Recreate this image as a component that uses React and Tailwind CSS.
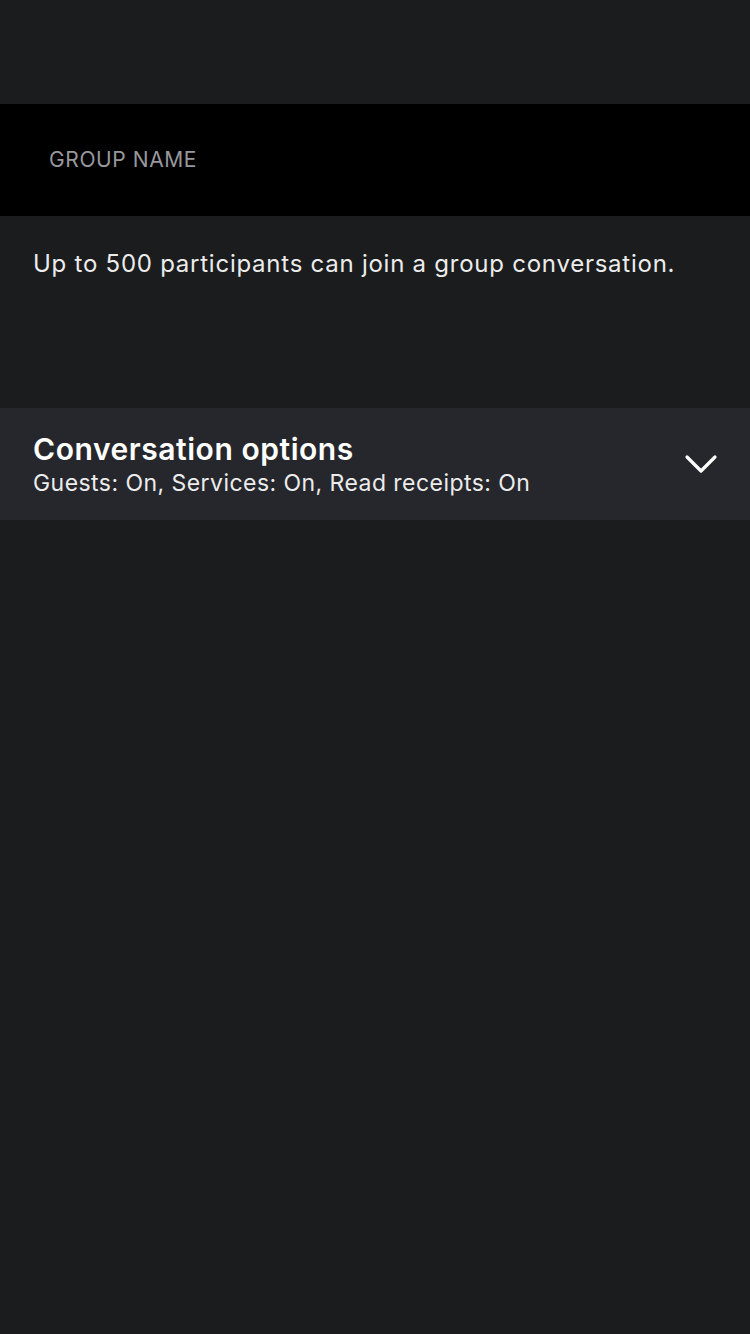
export default function App() {
  return (
    <div className="min-h-[1334px] w-[750px] bg-[#1b1c1e] font-['Inter',sans-serif] text-white">
      <div className="h-[104px]" />

      <div className="flex h-[112px] items-center bg-black px-[49px]">
        <span className="text-[21px] tracking-[0.6px] text-[#98989d]">GROUP NAME</span>
      </div>

      <div className="h-[192px] px-[33px] pt-[33px]">
        <p className="text-[24px] leading-[30px] tracking-[0.75px] text-[#ececec]">
          Up to 500 participants can join a group conversation.
        </p>
      </div>

      <button className="flex h-[112px] w-full items-center justify-between bg-[#26272c] pl-[33px] pr-[32px] text-left">
        <div className="flex flex-col pt-[2px]">
          <span className="text-[30px] font-semibold leading-[36px] tracking-[0.55px]">Conversation options</span>
          <span className="text-[23px] leading-[32px] tracking-[0.45px] text-[#ececec]">Guests: On, Services: On, Read receipts: On</span>
        </div>
        <svg width="34" height="22" viewBox="0 0 34 22" fill="none">
          <path d="M3 4 L17 18 L31 4" stroke="white" strokeWidth="3.2" strokeLinecap="round" strokeLinejoin="round" />
        </svg>
      </button>
    </div>
  )
}
